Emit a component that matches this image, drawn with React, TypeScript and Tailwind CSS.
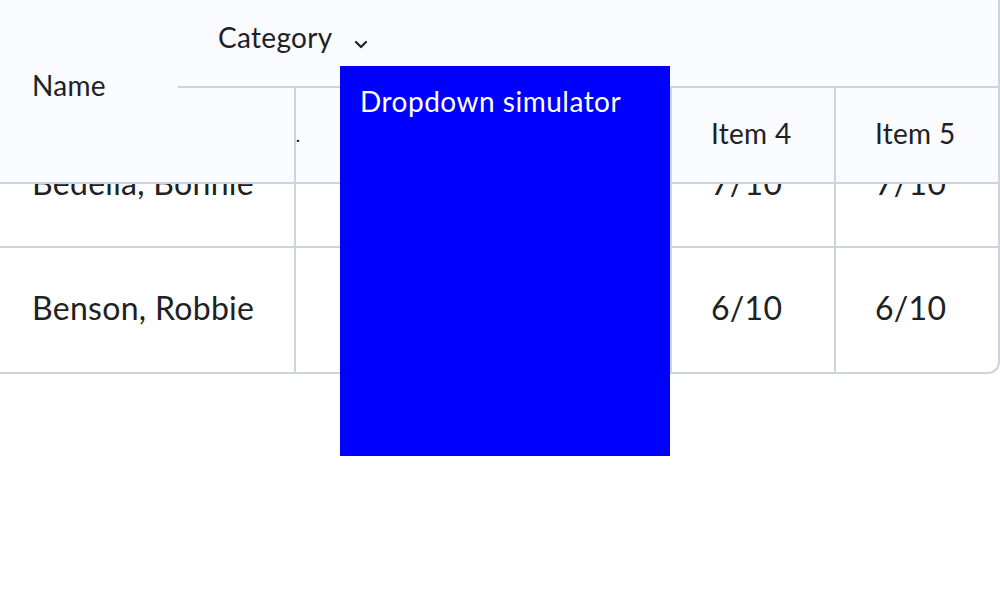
import React from 'react';

const ROWS = [
  { name: 'Bedella, Bonnie', item4: '7/10', item5: '7/10' },
  { name: 'Benson, Robbie', item4: '6/10', item5: '6/10' },
];

function Chevron() {
  return (
    <svg className="ml-[22px] mt-[24px] h-[9px] w-[14px]" viewBox="0 0 14 9" fill="none">
      <path d="M2 2 L7 7 L12 2" stroke="#202122" strokeWidth={2.2} strokeLinecap="round" strokeLinejoin="round" />
    </svg>
  );
}

export default function App() {
  return (
    <div className="relative h-[600px] w-[1000px] overflow-hidden bg-white font-['Lato',sans-serif] tracking-[0.3px] text-[#202122]">
      <div className="w-[1000px] overflow-hidden rounded-br-[12px] border-r-2 border-b-2 border-[#cdd5dc]">
        <div className="relative z-10 grid h-[184px] grid-cols-[178px_118px_376px_164px_162px] grid-rows-[86px_96px] border-b-2 border-[#cdd5dc] bg-[#f9fbff] text-[28px]">
          <div className="col-start-1 col-span-1 row-start-1 row-span-2 pl-[32px] pt-[64px]">Name</div>
          <div className="col-start-2 col-span-4 row-start-1 flex items-start pl-[40px] pt-[16px]">
            <span>Category</span>
            <Chevron />
          </div>
          <div className="col-start-2 row-start-2 border-t-2 border-r-2 border-[#cdd5dc]" />
          <div className="col-start-3 row-start-2 border-t-2 border-r-2 border-[#cdd5dc] pt-[36px] text-[16px] font-bold">.</div>
          <div className="col-start-4 row-start-2 border-t-2 border-r-2 border-[#cdd5dc] pl-[39px] pt-[24px]">Item 4</div>
          <div className="col-start-5 row-start-2 border-t-2 border-[#cdd5dc] pl-[39px] pt-[24px]">Item 5</div>
        </div>

        {/* body, scrolled under the header */}
        <div className="-mt-[60px] text-[32px]">
          {ROWS.map((row, i) => (
            <div
              key={row.name}
              className={`grid h-[124px] grid-cols-[296px_376px_164px_162px] ${
                i < ROWS.length - 1 ? 'border-b-2 border-[#cdd5dc]' : ''
              }`}
            >
              <div className="flex items-center border-r-2 border-[#cdd5dc] pb-[4px] pl-[32px]">{row.name}</div>
              <div className="border-r-2 border-[#cdd5dc]" />
              <div className="flex items-center border-r-2 border-[#cdd5dc] pb-[4px] pl-[39px]">{row.item4}</div>
              <div className="flex items-center pb-[4px] pl-[39px]">{row.item5}</div>
            </div>
          ))}
        </div>
      </div>

      {/* dropdown overlay */}
      <div className="absolute left-[340px] top-[66px] z-20 h-[390px] w-[330px] bg-[#0000ff] pl-[20px] pt-[14px] text-[28px] tracking-[0.5px] text-white">
        Dropdown simulator
      </div>
    </div>
  );
}
